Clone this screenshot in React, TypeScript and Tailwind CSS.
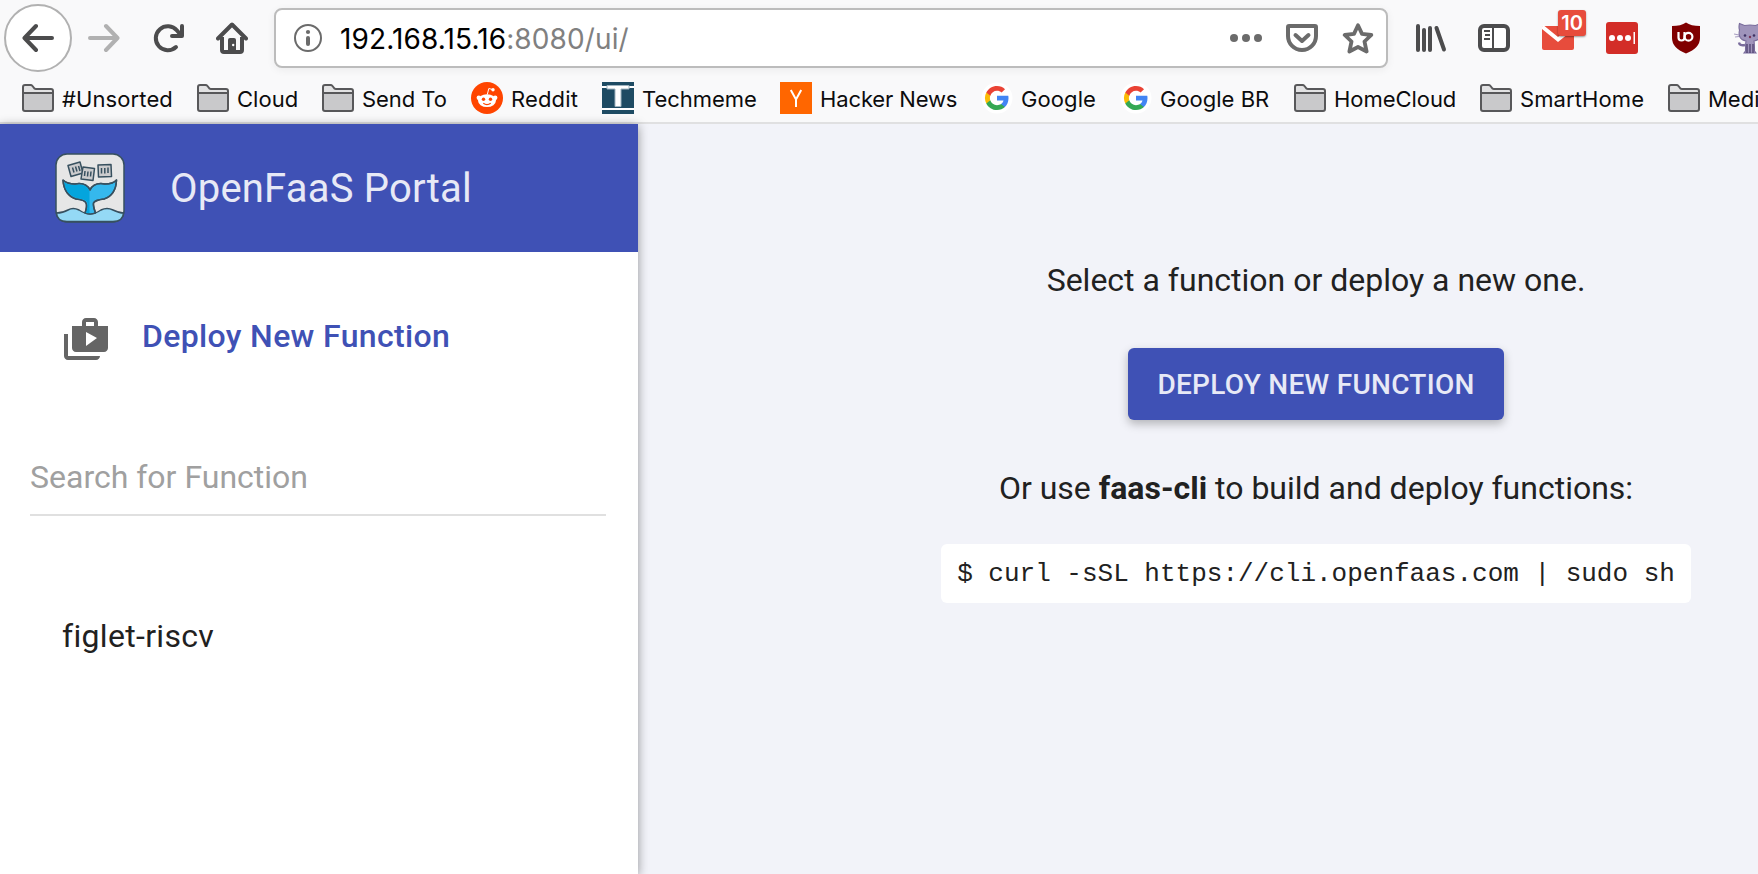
import type { ReactNode } from "react";

const ink = "#4c4c4d";

function Folder() {
  return (
    <svg width="32" height="28" viewBox="0 0 32 28" className="block shrink-0">
      <path d="M1 26V3Q1 1 3 1H8.5Q9.700 1 10.500 2L12.500 4.500Q13 5 14 5H29Q31 5 31 7V25Q31 27 29 27H3Q1 27 1 25Z" fill="#e2e2e3" />
      <path d="M1 9H31V25Q31 27 29 27H3Q1 27 1 25Z" fill="#c9c9cb" />
      <path d="M1 25V3Q1 1 3 1H8.500Q9.700 1 10.500 2L12.500 4.500Q13 5 14 5H29Q31 5 31 7V25Q31 27 29 27H3Q1 27 1 25ZM1 9H31" fill="none" stroke="#58585a" strokeWidth="2" />
    </svg>
  );
}

function Reddit() {
  return (
    <svg width="32" height="32" viewBox="0 0 32 32">
      <circle cx="16" cy="16" r="16" fill="#ff4500" />
      <g fill="#fff">
        <ellipse cx="16" cy="18.600" rx="9" ry="6.400" />
        <circle cx="7.800" cy="15.800" r="2.200" />
        <circle cx="24.200" cy="15.800" r="2.200" />
        <circle cx="22" cy="7.700" r="1.700" />
      </g>
      <path d="M16.300 12.500L17.800 6.500L21.500 7.500" fill="none" stroke="#fff" strokeWidth="1" />
      <circle cx="12.500" cy="17.300" r="1.700" fill="#ff4500" />
      <circle cx="19.500" cy="17.300" r="1.700" fill="#ff4500" />
      <path d="M12.300 21.300Q16 24 19.700 21.300" fill="none" stroke="#ff4500" strokeWidth="1.100" />
    </svg>
  );
}

function Techmeme() {
  return (
    <svg width="32" height="32" viewBox="0 0 32 32">
      <path d="M0 0H32V32H0Z" fill="#1e4b63" />
      <path d="M0 4H32V6H0ZM0 26H32V28H0Z" fill="#fff" />
      <path d="M5 3.500H27V7H19V24.500H13V7H5Z" fill="#fff" stroke="#9fb4c0" strokeWidth="1" />
    </svg>
  );
}

function HackerNews() {
  return (
    <svg width="32" height="32" viewBox="0 0 32 32">
      <path d="M0 0H32V32H0Z" fill="#ff6600" />
      <path d="M10.800 8L16 17.500L21.200 8M16 17V25" fill="none" stroke="#fff" strokeWidth="2" />
    </svg>
  );
}

function Google() {
  return (
    <svg width="32" height="32" viewBox="0 0 32 32">
      <circle cx="16" cy="16" r="15.500" fill="#fff" />
      <g transform="translate(4 4)">
        <path fill="#4285F4" d="M23.500 12.270c0-.820-.070-1.640-.210-2.430H12v4.600h6.470c-.280 1.480-1.130 2.730-2.400 3.580v2.980h3.860c2.260-2.090 3.570-5.170 3.570-8.730z" />
        <path fill="#34A853" d="M12 24c3.240 0 5.950-1.080 7.930-2.910l-3.860-3c-1.080.720-2.450 1.160-4.070 1.160-3.130 0-5.780-2.110-6.730-4.960H1.290v3.090C3.260 21.300 7.310 24 12 24z" />
        <path fill="#FBBC05" d="M5.270 14.290A7.100 7.100 0 0 1 4.890 12c0-.800.140-1.570.380-2.290V6.620H1.290a11.860 11.860 0 0 0 0 10.760l3.980-3.090z" />
        <path fill="#EA4335" d="M12 4.750c1.770 0 3.350.610 4.600 1.800l3.420-3.420C17.950 1.190 15.240 0 12 0 7.310 0 3.260 2.700 1.290 6.620l3.980 3.090c.950-2.850 3.600-4.960 6.730-4.960z" />
      </g>
    </svg>
  );
}

const bookmarks: { label: string; icon: ReactNode; slot: string; track: string }[] = [
  { label: "#Unsorted", icon: <Folder />, slot: "w-[175px]", track: "tracking-[0.1px]" },
  { label: "Cloud", icon: <Folder />, slot: "w-[125px]", track: "tracking-[0.05px]" },
  { label: "Send To", icon: <Folder />, slot: "w-[149px]", track: "tracking-[-0.05px]" },
  { label: "Reddit", icon: <Reddit />, slot: "w-[131px]", track: "tracking-[0.15px]" },
  { label: "Techmeme", icon: <Techmeme />, slot: "w-[178px]", track: "tracking-[-0.05px]" },
  { label: "Hacker News", icon: <HackerNews />, slot: "w-[201px]", track: "tracking-[-0.13px]" },
  { label: "Google", icon: <Google />, slot: "w-[139px]", track: "tracking-[0.1px]" },
  { label: "Google BR", icon: <Google />, slot: "w-[174px]", track: "tracking-[0px]" },
  { label: "HomeCloud", icon: <Folder />, slot: "w-[186px]", track: "tracking-[-0.05px]" },
  { label: "SmartHome", icon: <Folder />, slot: "w-[188px]", track: "tracking-[0.1px]" },
  { label: "Medi", icon: <Folder />, slot: "w-[90px]", track: "tracking-[0px]" },
];

function NavBar() {
  return (
    <div className="flex h-[76px] items-center pl-1">
      <div className="flex size-[68px] shrink-0 items-center justify-center rounded-full border-2 border-[#b1b1b1] bg-white">
        <svg width="32" height="32" viewBox="0 0 32 32" fill="none" stroke={ink} strokeWidth="4" strokeLinecap="round" strokeLinejoin="round">
          <path d="M30 16H3M14 4L2.500 16L14 28" />
        </svg>
      </div>
      <svg className="ml-4 shrink-0" width="32" height="32" viewBox="0 0 32 32" fill="none" stroke="#b1b1b1" strokeWidth="4" strokeLinecap="round" strokeLinejoin="round">
        <path d="M2 16H29M18 4L29.500 16L18 28" />
      </svg>
      <svg className="ml-8 shrink-0" width="32" height="32" viewBox="0 0 32 32" fill="none" stroke={ink} strokeWidth="4" strokeLinecap="round" strokeLinejoin="round">
        <path d="M24 25A12 12 0 1 1 25 8.500L28 12" />
        <path d="M30 4V14H20" />
      </svg>
      <svg className="ml-8 shrink-0" width="32" height="32" viewBox="0 0 32 32">
        <path d="M2 16.500L16 2.500L30 16.500" fill="none" stroke={ink} strokeWidth="4" strokeLinecap="round" strokeLinejoin="round" />
        <path d="M6 15V28Q6 30 8 30H24Q26 30 26 28V15" fill="none" stroke={ink} strokeWidth="4" />
        <path d="M12 30V18Q12 16 14 16H18Q20 16 20 18V30Z" fill={ink} />
        <circle cx="17.200" cy="23" r="1.200" fill="#fff" />
      </svg>
      <div className="ml-[26px] flex h-[60px] w-[1114px] shrink-0 items-center rounded-lg border-2 border-[#bcbcbc] bg-white pr-3 pl-[18px] shadow-[0_2px_8px_rgba(0,0,0,0.06)]">
        <svg width="28" height="28" viewBox="0 0 28 28">
          <circle cx="14" cy="14" r="13" fill="none" stroke="#6b6b6b" strokeWidth="2" />
          <circle cx="14" cy="8" r="2.100" fill="#6b6b6b" />
          <path d="M14 14V20" stroke="#6b6b6b" strokeWidth="4" strokeLinecap="round" />
        </svg>
        <div className="ml-[18px] grow pt-[2px] font-['Inter','Liberation_Sans',sans-serif] text-[28px] leading-8 tracking-[0.12px] text-black">
          192.168.15.16<span className="text-[#808080]">:8080/ui/</span>
        </div>
        <svg width="32" height="32" viewBox="0 0 32 32" fill="#6b6b6b">
          <circle cx="4" cy="16" r="4" />
          <circle cx="16" cy="16" r="4" />
          <circle cx="28" cy="16" r="4" />
        </svg>
        <svg className="ml-6" width="32" height="32" viewBox="0 0 32 32" fill="none" stroke="#6b6b6b" strokeWidth="4" strokeLinecap="round" strokeLinejoin="round">
          <path d="M3 4H29Q30 4 30 5V14A14 14 0 0 1 2 14V5Q2 4 3 4Z" />
          <path d="M9.500 13L16 19L22.500 13" />
        </svg>
        <svg className="ml-6" width="32" height="32" viewBox="0 0 32 32" fill="none" stroke="#6b6b6b" strokeWidth="3.800" strokeLinejoin="round">
          <path d="M16 3.200L20 11.900L29.300 13L22.500 19.500L24.600 29.500L16 25L7.400 29.500L9.500 19.500L2.700 13L12 11.900Z" />
        </svg>
      </div>
      <svg className="ml-7 shrink-0" width="32" height="32" viewBox="0 0 32 32" fill="none" stroke={ink} strokeWidth="4" strokeLinecap="round">
        <path d="M2 4V28M8 8V28M14 6V28M20.500 6L28 27.500" />
      </svg>
      <svg className="ml-[30px] shrink-0" width="32" height="32" viewBox="0 0 32 32" fill="none" stroke={ink}>
        <rect x="2" y="4" width="28" height="24" rx="4" strokeWidth="4" fill="#fff" />
        <path d="M15 4V28" strokeWidth="2" />
        <path d="M6 9H12M7 13H12M6 17H12" strokeWidth="2" />
      </svg>
      <div className="relative ml-8 h-8 w-8 shrink-0">
        <svg width="32" height="32" viewBox="0 0 32 32">
          <path d="M0 4H32V26Q32 28 30 28H2Q0 28 0 26Z" fill="#e74c3c" />
          <path d="M0 4.500L16 17.500L32 4.500" fill="none" stroke="#fff" strokeWidth="4" />
        </svg>
        <div className="absolute -top-3 left-4 flex h-[26px] w-7 items-center justify-center rounded-[3px] bg-[#e74c3c] font-['Inter','Liberation_Sans',sans-serif] text-[20px] font-semibold text-white shadow-[0_1px_2px_rgba(0,0,0,0.4)]">
          10
        </div>
      </div>
      <svg className="ml-8 shrink-0" width="32" height="32" viewBox="0 0 32 32">
        <rect width="32" height="32" rx="3" fill="#d32d27" />
        <g fill="#fff">
          <circle cx="6" cy="16" r="3" />
          <circle cx="14" cy="16" r="3" />
          <circle cx="22" cy="16" r="3" />
          <rect x="27.500" y="10" width="1.500" height="12" />
        </g>
      </svg>
      <svg className="ml-8 shrink-0" width="32" height="32" viewBox="0 0 32 32">
        <path d="M16 0.500Q21 4 30 4V16Q30 26 16 31.500Q2 26 2 16V4Q11 4 16 0.500Z" fill="#800000" />
        <path d="M8.500 10V15.500Q8.500 18.500 11.500 18.500T14.500 15.500V10" fill="none" stroke="#fff" strokeWidth="2.200" />
        <circle cx="18.500" cy="14.700" r="3.900" fill="none" stroke="#fff" strokeWidth="2.200" />
      </svg>
      <svg className="ml-8 shrink-0" width="32" height="32" viewBox="0 0 32 32">
        <path d="M0 12L5 13M1 15L5 14.500" stroke="#a79cc0" strokeWidth="1.200" />
        <path d="M5 20.500Q5.500 24 11 23" fill="none" stroke="#7a6d9c" strokeWidth="2.400" />
        <path d="M5.500 1.500L10.500 3.500Q16 2.500 21.500 3.500L26.500 1.500Q27.500 5 26.500 8Q28.500 17.500 20 19Q20.500 22 20.500 29L22 31H10L11.500 29Q11.500 22 12 19Q3.500 17.500 5.500 8Q4.500 5 5.500 1.500Z" fill="#9f94bb" stroke="#786b9b" strokeWidth="1.100" />
        <path d="M13 22V31M16 22V31M19 22V31" stroke="#4d406f" strokeWidth="1.300" />
        <circle cx="11" cy="13.500" r="1.300" fill="#3e3263" />
        <circle cx="20" cy="13.500" r="1.300" fill="#3e3263" />
        <circle cx="16" cy="15" r="1.200" fill="#7a3558" />
      </svg>
    </div>
  );
}

function Logo() {
  return (
    <svg width="70" height="70" viewBox="0 0 70 70" stroke="#37505f" strokeWidth="1.500" strokeLinejoin="round">
      <rect x="1" y="1" width="68" height="68" rx="11" fill="#e6e6e6" />
      <path d="M1.500 60Q8 60 13 57T24 57Q30 61 35 61T46 57Q52 54 58 57T68.500 60Q68 68.500 58 68.500H12Q2 68.500 1.500 60Z" fill="#94d9f5" />
      <path d="M8 27Q12 31 20 31Q31 29 35 37Q39 29 50 31Q58 31 61.500 27Q61 42 49 46Q40 47 38.500 50Q38 53 40.500 60Q35 62 30 60Q32.500 53 31 50Q30 47 21 46Q9 42 8 27Z" fill="#35b8ed" />
      <path d="M9 29Q13 32 20 32Q31 30 34.500 38V60Q32 60.500 31 59.500Q33.500 53 32 49Q30 46 21 45Q10 41 9 29Z" fill="#04a5dd" stroke="none" />
      <g fill="#cbcbcd">
        <path d="M13 12.500L25 9L28 20L16 23.500Z" />
        <path d="M28 14L39.500 15.500L38 27.500L26 26Z" />
        <path d="M43 12L56 11.500L56.500 23.500L43.500 24Z" />
        <path d="M17.500 14.500L19 19.500M20.500 13.500L22 18.500M23.500 13L25 18M30 18L29.500 23M33 18.500L32.500 23.500M36 18.500L35.500 23.500M46.500 15V20.500M49.800 15V20.500M53 14.500V20" />
      </g>
      <path d="M8 27Q12 31 20 31Q31 29 35 37Q39 29 50 31Q58 31 61.500 27Q61 42 49 46Q40 47 38.500 50Q38 53 40.500 60M30 60Q32.500 53 31 50Q30 47 21 46Q9 42 8 27" fill="none" />
    </svg>
  );
}

export default function App() {
  return (
    <div className="flex h-[874px] w-[1758px] flex-col overflow-hidden bg-[#f2f3f9] font-['Roboto',sans-serif] text-[#212121]">
      <header className="h-[124px] shrink-0 overflow-hidden border-b-2 border-[#e0e0e1] bg-[#f9f9fa]">
        <NavBar />
        <nav className="flex h-11 items-center pl-[22px]">
          {bookmarks.map((b) => (
            <div key={b.label} className={`flex h-11 shrink-0 items-center gap-2 ${b.slot}`}>
              {b.icon}
              <span className={`pt-[2px] font-['Inter','Liberation_Sans',sans-serif] text-[22px] leading-7 whitespace-nowrap text-[#0c0c0d] ${b.track}`}>{b.label}</span>
            </div>
          ))}
        </nav>
      </header>
      <div className="flex min-h-0 grow">
        <aside className="z-10 flex w-[638px] shrink-0 flex-col bg-white shadow-[0_2px_10px_rgba(0,0,0,0.4)]">
          <div className="flex h-32 shrink-0 items-center bg-[#3f51b5] pl-[55px]">
            <Logo />
            <h1 className="ml-[45px] pt-[2px] text-[40px] leading-[48px] tracking-[0.2px] text-[#e7e9f6]">OpenFaaS Portal</h1>
          </div>
          <div className="mt-16 flex h-12 items-center pl-[62px]">
            <svg width="48" height="48" viewBox="0 0 24 24" fill="#656565">
              <path d="M3 9H1v11c0 1.110.890 2 2 2h14c1.110 0 2-.890 2-2H3V9zm15-4V3c0-1.110-.890-2-2-2h-4c-1.110 0-2 .890-2 2v2H5v11c0 1.110.890 2 2 2h14c1.110 0 2-.890 2-2V5h-5zm-6-2h4v2h-4V3zm0 12V8l5.500 3-5.500 4z" />
            </svg>
            <span className="ml-8 pb-2 text-[32px] leading-10 font-medium tracking-[0.34px] text-[#3f51b5]">Deploy New Function</span>
          </div>
          <div className="mt-[84px] mr-8 ml-[30px] h-[68px] border-b-2 border-[#e0e0e0] pt-[9px] text-[32px] leading-[40px] text-[#a0a0a0]">Search for Function</div>
          <div className="mt-[100px] ml-[62px] text-[32px] leading-10 tracking-[0.32px]">figlet-riscv</div>
        </aside>
        <main className="grow overflow-hidden">
          <div className="flex w-[1356px] flex-col items-center pt-[136px] text-[32px] leading-10">
            <p>Select a function or deploy a new one.</p>
            <button className="mt-12 h-[72px] w-[376px] rounded-md bg-[#3f51b5] pt-[2px] text-[28px] font-medium tracking-[0.28px] text-[#e7e9f6] shadow-[0_4px_10px_rgba(0,0,0,0.26)]">DEPLOY NEW FUNCTION</button>
            <p className="mt-12">
              Or use <b>faas-cli</b> to build and deploy functions:
            </p>
            <code className="mt-9 flex h-[59px] w-[750px] items-center justify-center rounded-md bg-white font-['Liberation_Mono',monospace] text-[26px] whitespace-pre">$ curl -sSL https://cli.openfaas.com | sudo sh</code>
          </div>
        </main>
      </div>
    </div>
  );
}
